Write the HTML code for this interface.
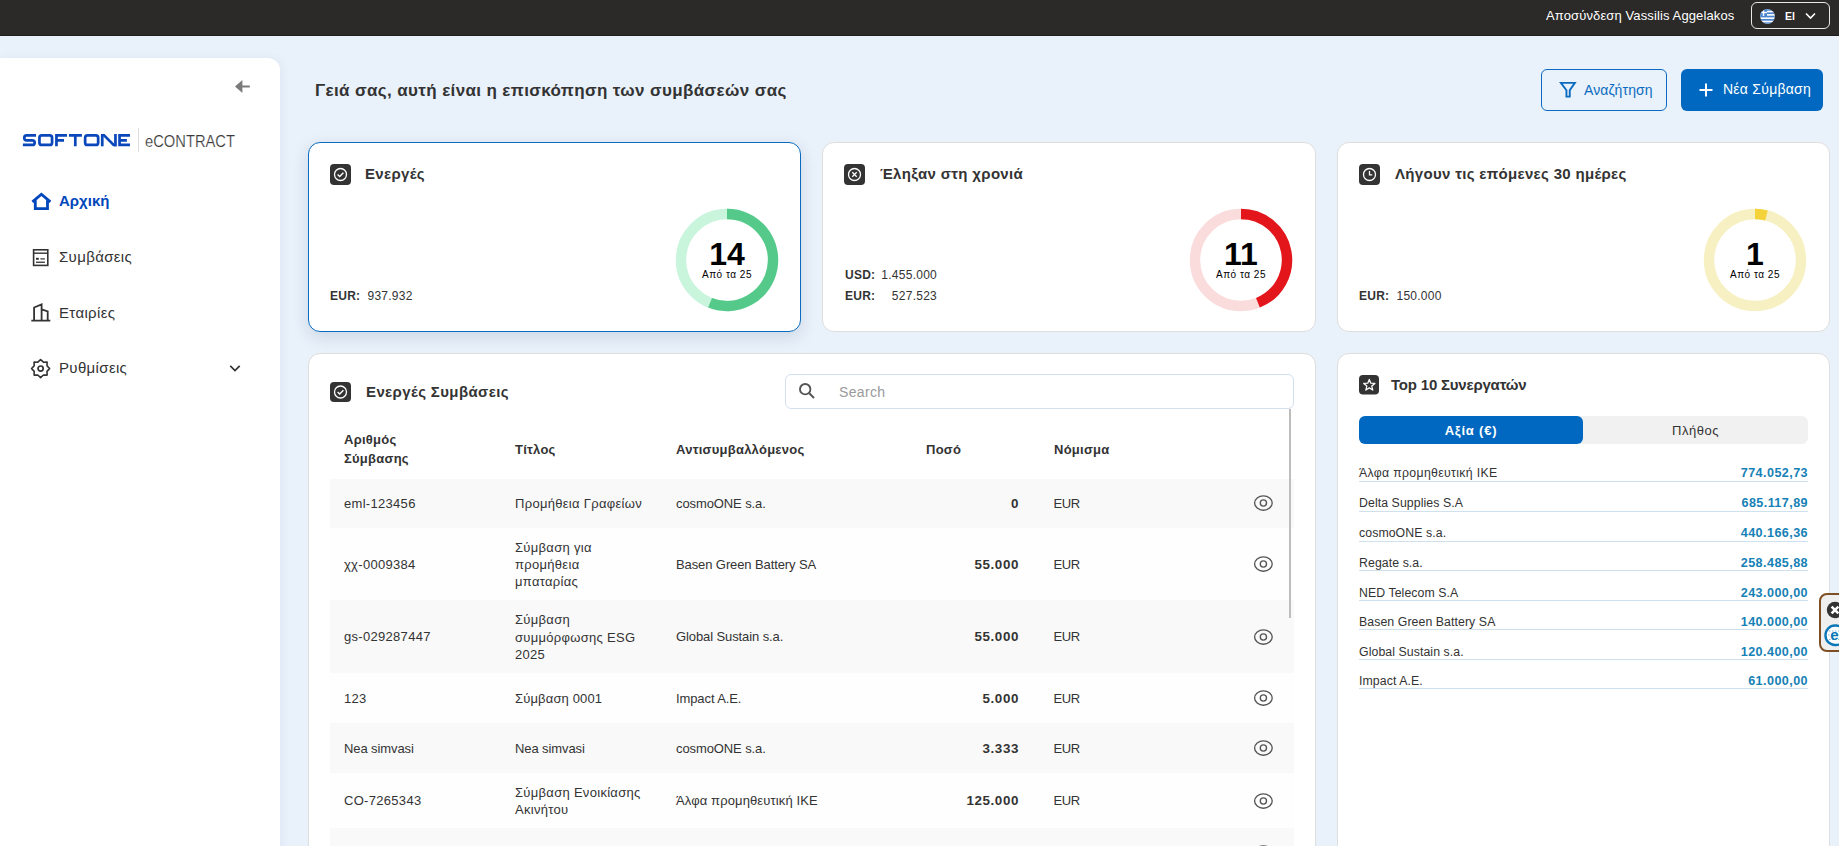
<!DOCTYPE html>
<html><head><meta charset="utf-8">
<style>
*{box-sizing:border-box;margin:0;padding:0}
html,body{width:1839px;height:846px;overflow:hidden}
body{font-family:"Liberation Sans",sans-serif;background:#e9f1fa;color:#333;position:relative}
.abs{position:absolute}
.topbar{position:absolute;left:0;top:0;width:1839px;height:36px;background:#2b2a28;border-bottom:1px solid #1f1e1c}
.logout{position:absolute;left:1546px;top:8px;font-size:13px;color:#fff;white-space:nowrap;letter-spacing:.12px}
.lang{position:absolute;left:1751px;top:2px;width:79px;height:27px;border:1px solid #e8e8e8;border-radius:6px}
.sidebar{position:absolute;left:0;top:58px;width:280px;height:800px;background:#fff;border-radius:0 12px 0 0;box-shadow:2px 0 10px rgba(60,90,130,.06)}
.nav{position:absolute;left:30px;font-size:15px;color:#333;white-space:nowrap;letter-spacing:.35px}
.card{position:absolute;background:#fff;border:1px solid #dedede;border-radius:12px}
.ic{position:absolute;width:21px;height:21px;background:#333;border-radius:4px}
.ctitle{position:absolute;font-size:15px;font-weight:bold;color:#333;white-space:nowrap;letter-spacing:.32px}
.dnum{position:absolute;width:100px;text-align:center;font-size:32px;font-weight:bold;color:#000;line-height:36px}
.dsub{position:absolute;width:100px;text-align:center;font-size:10px;color:#000;line-height:14px;letter-spacing:.5px}
.amt{position:absolute;font-size:12px;color:#333;white-space:nowrap;line-height:16px;letter-spacing:.25px}
.th{position:absolute;font-size:13px;letter-spacing:.25px;font-weight:bold;color:#333;white-space:nowrap;line-height:17px}
.row{position:absolute;left:330px;width:964px}
.td{position:absolute;top:calc(50% + 1px);transform:translateY(-50%);font-size:13px;color:#333;line-height:17.2px;white-space:nowrap}
.li{position:absolute;left:1359px;font-size:12.3px;color:#333;white-space:nowrap;line-height:16px;letter-spacing:.08px}
.gr{letter-spacing:.32px}
.lv{position:absolute;left:1608px;width:200px;text-align:right;font-size:12.6px;font-weight:bold;color:#1681b6;line-height:16px;letter-spacing:.42px}
.btn{position:absolute;border-radius:6px;font-size:14px;white-space:nowrap}
</style></head>
<body>
<div class="topbar">
  <div class="logout">Αποσύνδεση Vassilis Aggelakos</div>
  <div class="lang"><svg class="abs" style="left:8px;top:6px" width="15" height="15" viewBox="0 0 15 15"><defs><clipPath id="fc"><circle cx="7.5" cy="7.5" r="7.3"/></clipPath></defs><g clip-path="url(#fc)"><rect width="15" height="15" fill="#fff"/><rect y="0" width="15" height="1.7" fill="#4a86d0"/><rect y="3.35" width="15" height="1.7" fill="#4a86d0"/><rect y="6.7" width="15" height="1.7" fill="#4a86d0"/><rect y="10" width="15" height="1.7" fill="#4a86d0"/><rect y="13.35" width="15" height="1.7" fill="#4a86d0"/><rect width="7" height="7" fill="#4a86d0"/><rect x="2.8" y="0" width="1.4" height="7" fill="#fff"/><rect x="0" y="2.8" width="7" height="1.4" fill="#fff"/></g></svg><div class="abs" style="left:33px;top:7px;font-size:10.5px;font-weight:bold;color:#fff">El</div><svg class="abs" style="left:52px;top:8px" width="13" height="10" viewBox="0 0 13 10"><path d="M2 2.5 L6.5 7 L11 2.5" fill="none" stroke="#fff" stroke-width="1.6"/></svg></div>
</div>

<div class="sidebar"></div>
<svg class="abs" style="left:230px;top:75px" width="25" height="25" viewBox="0 0 25 25"><path d="M5 11.5 L12.4 5 V18 Z" fill="#7a7a7a"/><rect x="12" y="10.5" width="7.8" height="2" fill="#7a7a7a"/></svg>
<svg class="abs" style="left:0;top:120px" width="250" height="40" viewBox="0 120 250 40">
<g fill="none" stroke="#0a47bb" stroke-width="2.7">
<path d="M36.0 135.4 H26.6 Q24.3 135.4 24.3 137.7 V138.1 Q24.3 140.4 26.6 140.4 H32.3 Q34.65 140.4 34.65 142.7 V142.65 Q34.65 144.95 32.3 144.95 H22.9"/>
<rect x="39.45" y="135.4" width="12.6" height="9.55" rx="2.3"/>
<path d="M56.45 146.3 V135.4 H67.0 M56.45 140.4 H64.0"/>
<path d="M68.9 135.4 H81.9 M75.3 135.4 V146.3"/>
<rect x="85.15" y="135.4" width="13" height="9.55" rx="2.3"/>
<path d="M119.55 135.4 H130 M119.55 134.04 V146.3 M119.55 144.95 H130 M119.55 140.4 H126.9"/>
</g>
<g fill="#0a47bb"><rect x="100.9" y="134.04" width="2.7" height="12.26"/><rect x="114.1" y="134.04" width="2.7" height="12.26"/><path d="M100.9 134.04 H104.6 L116.8 146.3 H113.1 Z"/></g>
<rect x="138" y="128" width="1" height="24" fill="#dedede"/>
<text x="145" y="146.5" font-family="Liberation Sans" font-size="17.2" fill="#3a3a3a" stroke="#fff" stroke-width="0.2" textLength="90" lengthAdjust="spacingAndGlyphs">eCONTRACT</text>
</svg>
<svg class="abs" style="left:30px;top:191px" width="24" height="22" viewBox="0 0 24 22"><path d="M2.4 10.9 L11.4 3.3 L20.4 10.9 M5.3 8.6 V17.6 H17.5 V8.6" fill="none" stroke="#0047bb" stroke-width="2.8" stroke-linejoin="miter"/></svg>
<div class="nav" style="left:59px;top:192px;font-weight:bold;color:#0047bb;letter-spacing:0">Αρχική</div>
<svg class="abs" style="left:31px;top:248px" width="20" height="20" viewBox="0 0 20 20"><rect x="2.6" y="1.8" width="14.2" height="15.6" fill="none" stroke="#333" stroke-width="1.6"/><rect x="2.6" y="4.5" width="14.2" height="1.4" fill="#333"/><rect x="5" y="9.8" width="2.8" height="2" fill="#333"/><rect x="9.4" y="10.3" width="4.5" height="1.2" fill="#333"/><rect x="5" y="13.6" width="8.9" height="1.3" fill="#333"/></svg>
<div class="nav" style="left:59px;top:248px">Συμβάσεις</div>
<svg class="abs" style="left:30px;top:302px" width="24" height="22" viewBox="0 0 24 22"><path d="M1.3 18.6 H20.3 M4.1 18.6 V5.5 L11.6 2.3 V18.6 M11.6 7.4 L17.7 9.3 V18.6" fill="none" stroke="#333" stroke-width="1.8"/></svg>
<div class="nav" style="left:59px;top:304px">Εταιρίες</div>
<svg class="abs" style="left:30px;top:358px" width="22" height="22" viewBox="0 0 22 22"><path d="M10.6 1.6 L13.4 4.2 L17.1 4.1 L17 7.8 L19.6 10.6 L17 13.4 L17.1 17.1 L13.4 17 L10.6 19.6 L7.8 17 L4.1 17.1 L4.2 13.4 L1.6 10.6 L4.2 7.8 L4.1 4.1 L7.8 4.2 Z" fill="none" stroke="#333" stroke-width="1.6" stroke-linejoin="round"/><circle cx="10.6" cy="10.6" r="2.6" fill="none" stroke="#333" stroke-width="1.7"/></svg>
<div class="nav" style="left:59px;top:359px">Ρυθμίσεις</div>
<svg class="abs" style="left:228px;top:362px" width="14" height="12" viewBox="0 0 14 12"><path d="M2.3 3.8 L7 8.6 L11.7 3.8" fill="none" stroke="#333" stroke-width="1.7"/></svg>

<div class="abs" style="left:315px;top:81px;font-size:17px;font-weight:bold;color:#333;white-space:nowrap;letter-spacing:.37px">Γειά σας, αυτή είναι η επισκόπηση των συμβάσεών σας</div>

<div class="btn" style="left:1541px;top:69px;width:126px;height:42px;border:1.3px solid #0a6cc0;color:#0a6cc0">
<svg class="abs" style="left:17px;top:11px" width="20" height="20" viewBox="0 0 20 20"><path d="M1.85 1.85 H15.85 L10.75 9.2 V15.65 H7.45 V9.2 Z" fill="none" stroke="#0a6cc0" stroke-width="1.9" stroke-linejoin="miter"/></svg>
<div class="abs" style="left:42px;top:12px;letter-spacing:.12px">Αναζήτηση</div></div>
<div class="btn" style="left:1681px;top:69px;width:142px;height:42px;background:#0068c0;color:#fff">
<svg class="abs" style="left:17px;top:13px" width="16" height="16" viewBox="0 0 16 16"><path d="M8 1.5 V14.5 M1.5 8 H14.5" stroke="#fff" stroke-width="2"/></svg>
<div class="abs" style="left:42px;top:12px;letter-spacing:.25px">Νέα Σύμβαση</div></div>


<div class="card" style="left:308px;top:142px;width:493px;height:190px;border-color:#0a6cc0;box-shadow:0 5px 16px rgba(40,70,110,.15)"></div>
<div class="card" style="left:822px;top:142px;width:494px;height:190px"></div>
<div class="card" style="left:1337px;top:142px;width:493px;height:190px"></div>
<svg class="abs" style="left:330px;top:164px" width="21" height="21" viewBox="0 0 21 21"><rect width="21" height="21" rx="4" fill="#333"/><circle cx="10.5" cy="10.5" r="6" fill="none" stroke="#fff" stroke-width="1.3"/><path d="M7.6 10.6 L9.7 12.6 L13.4 8.8" fill="none" stroke="#fff" stroke-width="1.4"/></svg>
<div class="ctitle" style="left:365px;top:165px">Ενεργές</div>
<svg class="abs" style="left:667px;top:200px" width="120" height="120" viewBox="667 200 120 120"><circle cx="727" cy="260" r="46" fill="none" stroke="#c8f5dc" stroke-width="10.4"/><path d="M727 214 A46 46 0 1 1 710.07 302.77" fill="none" stroke="#55c98a" stroke-width="10.4"/></svg>
<div class="dnum" style="left:677px;top:236px">14</div>
<div class="dsub" style="left:677px;top:268px">Από τα 25</div>
<div class="amt" style="left:330px;top:288px"><b>EUR:</b>&nbsp; 937.932</div>

<svg class="abs" style="left:844px;top:164px" width="21" height="21" viewBox="0 0 21 21"><rect width="21" height="21" rx="4" fill="#333"/><circle cx="10.5" cy="10.5" r="6" fill="none" stroke="#fff" stroke-width="1.3"/><path d="M8.3 8.3 L12.7 12.7 M12.7 8.3 L8.3 12.7" fill="none" stroke="#fff" stroke-width="1.3"/></svg>
<div class="ctitle" style="left:880px;top:165px">Έληξαν στη χρονιά</div>
<svg class="abs" style="left:1181px;top:200px" width="120" height="120" viewBox="1181 200 120 120"><circle cx="1241" cy="260" r="46" fill="none" stroke="#fadcdd" stroke-width="10.4"/><path d="M1241 214 A46 46 0 0 1 1257.93 302.77" fill="none" stroke="#e2161b" stroke-width="10.4"/></svg>
<div class="dnum" style="left:1191px;top:236px">11</div>
<div class="dsub" style="left:1191px;top:268px">Από τα 25</div>
<div class="amt" style="left:845px;top:267px"><b>USD:</b></div><div class="amt" style="left:845px;top:288px"><b>EUR:</b></div>
<div class="amt" style="left:846px;top:267px;width:91px;text-align:right">1.455.000</div>
<div class="amt" style="left:846px;top:288px;width:91px;text-align:right">527.523</div>

<svg class="abs" style="left:1359px;top:164px" width="21" height="21" viewBox="0 0 21 21"><rect width="21" height="21" rx="4" fill="#333"/><circle cx="10.5" cy="10.5" r="6" fill="none" stroke="#fff" stroke-width="1.3"/><path d="M10.5 7 V10.8 H13.3" fill="none" stroke="#fff" stroke-width="1.3"/></svg>
<div class="ctitle" style="left:1395px;top:165px">Λήγουν τις επόμενες 30 ημέρες</div>
<svg class="abs" style="left:1695px;top:200px" width="120" height="120" viewBox="1695 200 120 120"><circle cx="1755" cy="260" r="46" fill="none" stroke="#f7f0c2" stroke-width="10.4"/><path d="M1755 214 A46 46 0 0 1 1766.44 215.45" fill="none" stroke="#f3d23a" stroke-width="10.4"/></svg>
<div class="dnum" style="left:1705px;top:236px">1</div>
<div class="dsub" style="left:1705px;top:268px">Από τα 25</div>
<div class="amt" style="left:1359px;top:288px"><b>EUR:</b>&nbsp; 150.000</div>

<div class="card" style="left:308px;top:353px;width:1008px;height:520px"></div>
<svg class="abs" style="left:330px;top:382px" width="21" height="21" viewBox="0 0 21 21"><rect width="21" height="20" rx="4" fill="#333"/><circle cx="10.5" cy="10" r="6" fill="none" stroke="#fff" stroke-width="1.3"/><path d="M7.6 10.1 L9.7 12.1 L13.4 8.3" fill="none" stroke="#fff" stroke-width="1.4"/></svg>
<div class="ctitle" style="left:366px;top:383px;letter-spacing:.38px">Ενεργές Συμβάσεις</div>
<div class="abs" style="left:785px;top:374px;width:509px;height:35px;border:1px solid #d3e1ef;border-radius:6px;background:#fff"></div>
<svg class="abs" style="left:797px;top:381px" width="20" height="20" viewBox="0 0 20 20"><circle cx="8.2" cy="8.2" r="5.2" fill="none" stroke="#555" stroke-width="1.9"/><path d="M12 12 L17 17" stroke="#555" stroke-width="2"/></svg>
<div class="abs" style="left:839px;top:384px;font-size:14px;color:#9a9a9a;letter-spacing:.35px">Search</div>
<div class="th" style="left:344px;top:430px;line-height:19px">Αριθμός<br>Σύμβασης</div>
<div class="th" style="left:515px;top:441px">Τίτλος</div>
<div class="th" style="left:676px;top:441px">Αντισυμβαλλόμενος</div>
<div class="th" style="left:926px;top:441px">Ποσό</div>
<div class="th" style="left:1054px;top:441px">Νόμισμα</div>
<div class="row" style="top:478.5px;height:49.5px;background:#f9f9f9">
<div class="td" style="left:14px;letter-spacing:.3px">eml-123456</div>
<div class="td" style="left:185px;letter-spacing:.3px">Προμήθεια Γραφείων</div>
<div class="td" style="left:346px;letter-spacing:-.1px">cosmoONE s.a.</div>
<div class="td" style="left:589px;width:100px;text-align:right;font-weight:bold;font-size:13.4px;letter-spacing:.6px;margin-left:0">0</div>
<div class="td" style="left:723.6px;letter-spacing:-.5px">EUR</div>
</div>
<svg class="abs" style="left:1252px;top:494.4px" width="22" height="18" viewBox="0 0 22 18"><ellipse cx="11.4" cy="9" rx="8.8" ry="7.2" fill="none" stroke="#555" stroke-width="1.35"/><circle cx="11.4" cy="9" r="3.1" fill="none" stroke="#555" stroke-width="1.35"/></svg>
<div class="row" style="top:528px;height:72px;background:#fefefe">
<div class="td" style="left:14px;letter-spacing:.3px">χχ-0009384</div>
<div class="td" style="left:185px;letter-spacing:.3px">Σύμβαση για<br>προμήθεια<br>μπαταρίας</div>
<div class="td" style="left:346px;letter-spacing:-.1px">Basen Green Battery SA</div>
<div class="td" style="left:589px;width:100px;text-align:right;font-weight:bold;font-size:13.4px;letter-spacing:.6px;margin-left:0">55.000</div>
<div class="td" style="left:723.6px;letter-spacing:-.5px">EUR</div>
</div>
<svg class="abs" style="left:1252px;top:555.2px" width="22" height="18" viewBox="0 0 22 18"><ellipse cx="11.4" cy="9" rx="8.8" ry="7.2" fill="none" stroke="#555" stroke-width="1.35"/><circle cx="11.4" cy="9" r="3.1" fill="none" stroke="#555" stroke-width="1.35"/></svg>
<div class="row" style="top:600px;height:72.6px;background:#f9f9f9">
<div class="td" style="left:14px;letter-spacing:.3px">gs-029287447</div>
<div class="td" style="left:185px;letter-spacing:.3px">Σύμβαση<br>συμμόρφωσης ESG<br>2025</div>
<div class="td" style="left:346px;letter-spacing:-.1px">Global Sustain s.a.</div>
<div class="td" style="left:589px;width:100px;text-align:right;font-weight:bold;font-size:13.4px;letter-spacing:.6px;margin-left:0">55.000</div>
<div class="td" style="left:723.6px;letter-spacing:-.5px">EUR</div>
</div>
<svg class="abs" style="left:1252px;top:627.5px" width="22" height="18" viewBox="0 0 22 18"><ellipse cx="11.4" cy="9" rx="8.8" ry="7.2" fill="none" stroke="#555" stroke-width="1.35"/><circle cx="11.4" cy="9" r="3.1" fill="none" stroke="#555" stroke-width="1.35"/></svg>
<div class="row" style="top:672.6px;height:50.4px;background:#fefefe">
<div class="td" style="left:14px;letter-spacing:.3px">123</div>
<div class="td" style="left:185px;letter-spacing:.15px">Σύμβαση 0001</div>
<div class="td" style="left:346px;letter-spacing:-.1px">Impact A.E.</div>
<div class="td" style="left:589px;width:100px;text-align:right;font-weight:bold;font-size:13.4px;letter-spacing:.6px;margin-left:0">5.000</div>
<div class="td" style="left:723.6px;letter-spacing:-.5px">EUR</div>
</div>
<svg class="abs" style="left:1252px;top:689.0px" width="22" height="18" viewBox="0 0 22 18"><ellipse cx="11.4" cy="9" rx="8.8" ry="7.2" fill="none" stroke="#555" stroke-width="1.35"/><circle cx="11.4" cy="9" r="3.1" fill="none" stroke="#555" stroke-width="1.35"/></svg>
<div class="row" style="top:723px;height:49.8px;background:#f9f9f9">
<div class="td" style="left:14px;letter-spacing:-.1px">Nea simvasi</div>
<div class="td" style="left:185px;letter-spacing:-.1px">Nea simvasi</div>
<div class="td" style="left:346px;letter-spacing:-.1px">cosmoONE s.a.</div>
<div class="td" style="left:589px;width:100px;text-align:right;font-weight:bold;font-size:13.4px;letter-spacing:.6px;margin-left:0">3.333</div>
<div class="td" style="left:723.6px;letter-spacing:-.5px">EUR</div>
</div>
<svg class="abs" style="left:1252px;top:739.1px" width="22" height="18" viewBox="0 0 22 18"><ellipse cx="11.4" cy="9" rx="8.8" ry="7.2" fill="none" stroke="#555" stroke-width="1.35"/><circle cx="11.4" cy="9" r="3.1" fill="none" stroke="#555" stroke-width="1.35"/></svg>
<div class="row" style="top:772.8px;height:54.9px;background:#fefefe">
<div class="td" style="left:14px;letter-spacing:.3px">CO-7265343</div>
<div class="td" style="left:185px;letter-spacing:.3px">Σύμβαση Ενοικίασης<br>Ακινήτου</div>
<div class="td" style="left:346px;letter-spacing:.12px">Άλφα προμηθευτική ΙΚΕ</div>
<div class="td" style="left:589px;width:100px;text-align:right;font-weight:bold;font-size:13.4px;letter-spacing:.6px;margin-left:0">125.000</div>
<div class="td" style="left:723.6px;letter-spacing:-.5px">EUR</div>
</div>
<svg class="abs" style="left:1252px;top:791.5px" width="22" height="18" viewBox="0 0 22 18"><ellipse cx="11.4" cy="9" rx="8.8" ry="7.2" fill="none" stroke="#555" stroke-width="1.35"/><circle cx="11.4" cy="9" r="3.1" fill="none" stroke="#555" stroke-width="1.35"/></svg>
<div class="row" style="top:827.7px;height:50px;background:#f9f9f9">
</div>
<svg class="abs" style="left:1252px;top:843.9px" width="22" height="18" viewBox="0 0 22 18"><ellipse cx="11.4" cy="9" rx="8.8" ry="7.2" fill="none" stroke="#555" stroke-width="1.35"/><circle cx="11.4" cy="9" r="3.1" fill="none" stroke="#555" stroke-width="1.35"/></svg>
<div class="abs" style="left:1289px;top:409px;width:2px;height:209px;background:#bdbdbd"></div>
<div class="card" style="left:1337px;top:353px;width:493px;height:520px"></div>
<svg class="abs" style="left:1359px;top:375px" width="20" height="20" viewBox="0 0 20 20"><rect width="20" height="19.5" rx="4" fill="#333"/><path d="M10.30 4.40 L11.83 8.20 L15.91 8.48 L12.77 11.10 L13.77 15.07 L10.30 12.90 L6.83 15.07 L7.83 11.10 L4.69 8.48 L8.77 8.20 Z" fill="none" stroke="#fff" stroke-width="1.25" stroke-linejoin="round"/></svg>
<div class="ctitle" style="left:1391px;top:376px;letter-spacing:-.2px">Top 10 Συνεργατών</div>
<div class="abs" style="left:1359px;top:416px;width:449px;height:28px;background:#f1f1f1;border-radius:6px"></div>
<div class="abs" style="left:1359px;top:416px;width:224px;height:28px;background:#0068c0;border-radius:6px;color:#fff;font-size:13px;font-weight:bold;text-align:center;line-height:29px;letter-spacing:.8px">Αξία (€)</div>
<div class="abs" style="left:1583px;top:416px;width:225px;height:28px;color:#333;font-size:13px;text-align:center;line-height:29px;letter-spacing:.5px">Πλήθος</div>
<div class="abs" style="left:1359px;top:481px;width:449px;height:1px;background:#cfe0ee"></div>
<div class="li gr" style="top:465.4px">Άλφα προμηθευτική ΙΚΕ</div><div class="lv" style="top:465.4px">774.052,73</div>
<div class="abs" style="left:1359px;top:511px;width:449px;height:1px;background:#cfe0ee"></div>
<div class="li" style="top:495.2px">Delta Supplies S.A</div><div class="lv" style="top:495.2px">685.117,89</div>
<div class="abs" style="left:1359px;top:541px;width:449px;height:1px;background:#cfe0ee"></div>
<div class="li" style="top:525.2px">cosmoONE s.a.</div><div class="lv" style="top:525.2px">440.166,36</div>
<div class="abs" style="left:1359px;top:570px;width:449px;height:1px;background:#cfe0ee"></div>
<div class="li" style="top:554.6px">Regate s.a.</div><div class="lv" style="top:554.6px">258.485,88</div>
<div class="abs" style="left:1359px;top:600px;width:449px;height:1px;background:#cfe0ee"></div>
<div class="li" style="top:584.6px">NED Telecom S.A</div><div class="lv" style="top:584.6px">243.000,00</div>
<div class="abs" style="left:1359px;top:629px;width:449px;height:1px;background:#cfe0ee"></div>
<div class="li" style="top:613.6px">Basen Green Battery SA</div><div class="lv" style="top:613.6px">140.000,00</div>
<div class="abs" style="left:1359px;top:659px;width:449px;height:1px;background:#cfe0ee"></div>
<div class="li" style="top:643.6px">Global Sustain s.a.</div><div class="lv" style="top:643.6px">120.400,00</div>
<div class="abs" style="left:1359px;top:688px;width:449px;height:1px;background:#cfe0ee"></div>
<div class="li" style="top:672.5px">Impact A.E.</div><div class="lv" style="top:672.5px">61.000,00</div>
<div class="abs" style="left:1819px;top:593px;width:30px;height:59px;border:2px solid #7f4f24;border-radius:8px;background:#efefef"></div>
<svg class="abs" style="left:1822px;top:598px" width="17" height="52" viewBox="0 0 17 52"><circle cx="13" cy="12" r="8.2" fill="#333"/><path d="M9.6 8.6 L16.4 15.4 M16.4 8.6 L9.6 15.4" stroke="#fff" stroke-width="2.6"/><rect x="3.5" y="27.5" width="20" height="19.5" rx="9.5" fill="#fff" stroke="#0a78b8" stroke-width="2.4"/><path d="M7 33 H20 M6 37 H21 M7 41.5 H20" stroke="#6aa6cc" stroke-width="0.8" stroke-dasharray="1.5 1.5"/><text x="8.3" y="42.3" font-family="Liberation Sans" font-weight="bold" font-size="15" fill="#0a78b8">e</text></svg>

</body></html>
